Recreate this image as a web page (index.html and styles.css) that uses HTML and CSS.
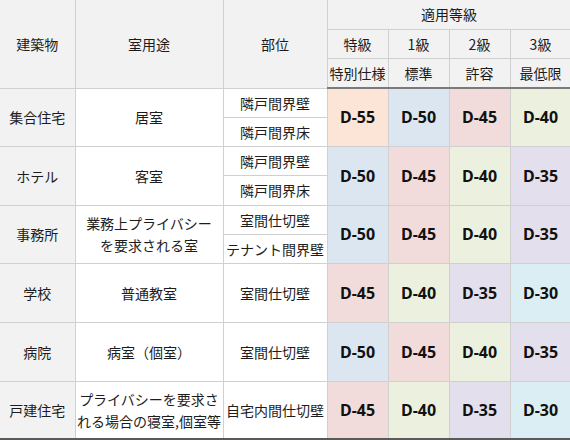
FILE: index.html
```html
<!DOCTYPE html>
<html lang="ja">
<head>
<meta charset="utf-8">
<link rel="stylesheet" href="styles.css">
</head>
<body>
<table class="grade-table">
  <colgroup>
    <col class="c-bld"><col class="c-use"><col class="c-part">
    <col class="c-g"><col class="c-g"><col class="c-g"><col class="c-g">
  </colgroup>
  <thead>
    <tr class="h-row">
      <th rowspan="3">建築物</th>
      <th rowspan="3">室用途</th>
      <th rowspan="3">部位</th>
      <th colspan="4">適用等級</th>
    </tr>
    <tr class="h-row">
      <th>特級</th><th>1級</th><th>2級</th><th>3級</th>
    </tr>
    <tr class="h-row h-last">
      <th>特別仕様</th><th>標準</th><th>許容</th><th>最低限</th>
    </tr>
  </thead>
  <tbody>
    <tr class="r-a">
      <td rowspan="2" class="bld">集合住宅</td>
      <td rowspan="2">居室</td>
      <td class="part">隣戸間界壁</td>
      <td rowspan="2" class="d d55">D-55</td>
      <td rowspan="2" class="d d50">D-50</td>
      <td rowspan="2" class="d d45">D-45</td>
      <td rowspan="2" class="d d40">D-40</td>
    </tr>
    <tr class="r-b"><td class="part">隣戸間界床</td></tr>

    <tr class="r-a">
      <td rowspan="2" class="bld">ホテル</td>
      <td rowspan="2">客室</td>
      <td class="part">隣戸間界壁</td>
      <td rowspan="2" class="d d50">D-50</td>
      <td rowspan="2" class="d d45">D-45</td>
      <td rowspan="2" class="d d40">D-40</td>
      <td rowspan="2" class="d d35">D-35</td>
    </tr>
    <tr class="r-b tall"><td class="part">隣戸間界床</td></tr>

    <tr class="r-a">
      <td rowspan="2" class="bld">事務所</td>
      <td rowspan="2" class="use2">業務上プライバシー<br>を要求される室</td>
      <td class="part">室間仕切壁</td>
      <td rowspan="2" class="d d50">D-50</td>
      <td rowspan="2" class="d d45">D-45</td>
      <td rowspan="2" class="d d40">D-40</td>
      <td rowspan="2" class="d d35">D-35</td>
    </tr>
    <tr class="r-b"><td class="part">テナント間界壁</td></tr>

    <tr class="r-a">
      <td rowspan="2" class="bld">学校</td>
      <td rowspan="2">普通教室</td>
      <td rowspan="2">室間仕切壁</td>
      <td rowspan="2" class="d d45">D-45</td>
      <td rowspan="2" class="d d40">D-40</td>
      <td rowspan="2" class="d d35">D-35</td>
      <td rowspan="2" class="d d30">D-30</td>
    </tr>
    <tr class="r-b tall"></tr>

    <tr class="r-a">
      <td rowspan="2" class="bld">病院</td>
      <td rowspan="2">病室（個室）</td>
      <td rowspan="2">室間仕切壁</td>
      <td rowspan="2" class="d d50">D-50</td>
      <td rowspan="2" class="d d45">D-45</td>
      <td rowspan="2" class="d d40">D-40</td>
      <td rowspan="2" class="d d35">D-35</td>
    </tr>
    <tr class="r-b tall"></tr>

    <tr class="r-a last">
      <td rowspan="2" class="bld">戸建住宅</td>
      <td rowspan="2" class="use2">プライバシーを要求さ<br>れる場合の寝室,個室等</td>
      <td rowspan="2">自宅内間仕切壁</td>
      <td rowspan="2" class="d d45">D-45</td>
      <td rowspan="2" class="d d40">D-40</td>
      <td rowspan="2" class="d d35">D-35</td>
      <td rowspan="2" class="d d30">D-30</td>
    </tr>
    <tr class="r-b"></tr>
  </tbody>
</table>
</body>
</html>
```

FILE: styles.css
```css
html, body {
  margin: 0;
  padding: 0;
  background: #ffffff;
}

.grade-table {
  width: 570px;
  table-layout: fixed;
  border-collapse: collapse;
  font-family: "Noto Sans CJK JP", "Noto Sans", sans-serif;
  font-size: 14px;
  color: #1c1c1c;
}

.c-bld { width: 75px; }
.c-use { width: 148px; }
.c-part { width: 104px; }
.c-g { width: 61px; }

.grade-table th,
.grade-table td {
  border: 1px solid #d0d0d0;
  padding: 0;
  text-align: center;
  vertical-align: middle;
  font-weight: normal;
  line-height: 20px;
  white-space: nowrap;
}

.grade-table tr:first-child th { border-top: none; }
.grade-table th:first-child,
.grade-table td:first-child { border-left: none; }

.grade-table th { background: #f2f2f2; }

.h-row { height: 29px; }
.h-last { height: 30px; }
.grade-table .h-last th { border-bottom: 2px solid #7a7a7a; }

.r-a, .r-b { height: 29px; }
.r-b.tall { height: 30px; }

.grade-table .bld { background: #f2f2f2; }

.grade-table .use2 { line-height: 22px; }

.grade-table .d {
  font-family: "Noto Sans", "Open Sans", sans-serif;
  font-weight: 700;
  font-size: 16px;
  color: #111111;
}

.d55 { background: #fce4d6; }
.d50 { background: #dce6f1; }
.d45 { background: #f2dcdb; }
.d40 { background: #ebf1de; }
.d35 { background: #e4dfec; }
.d30 { background: #daeef3; }

.grade-table .last td { border-bottom: 2px solid #5a5a5a; }
```
